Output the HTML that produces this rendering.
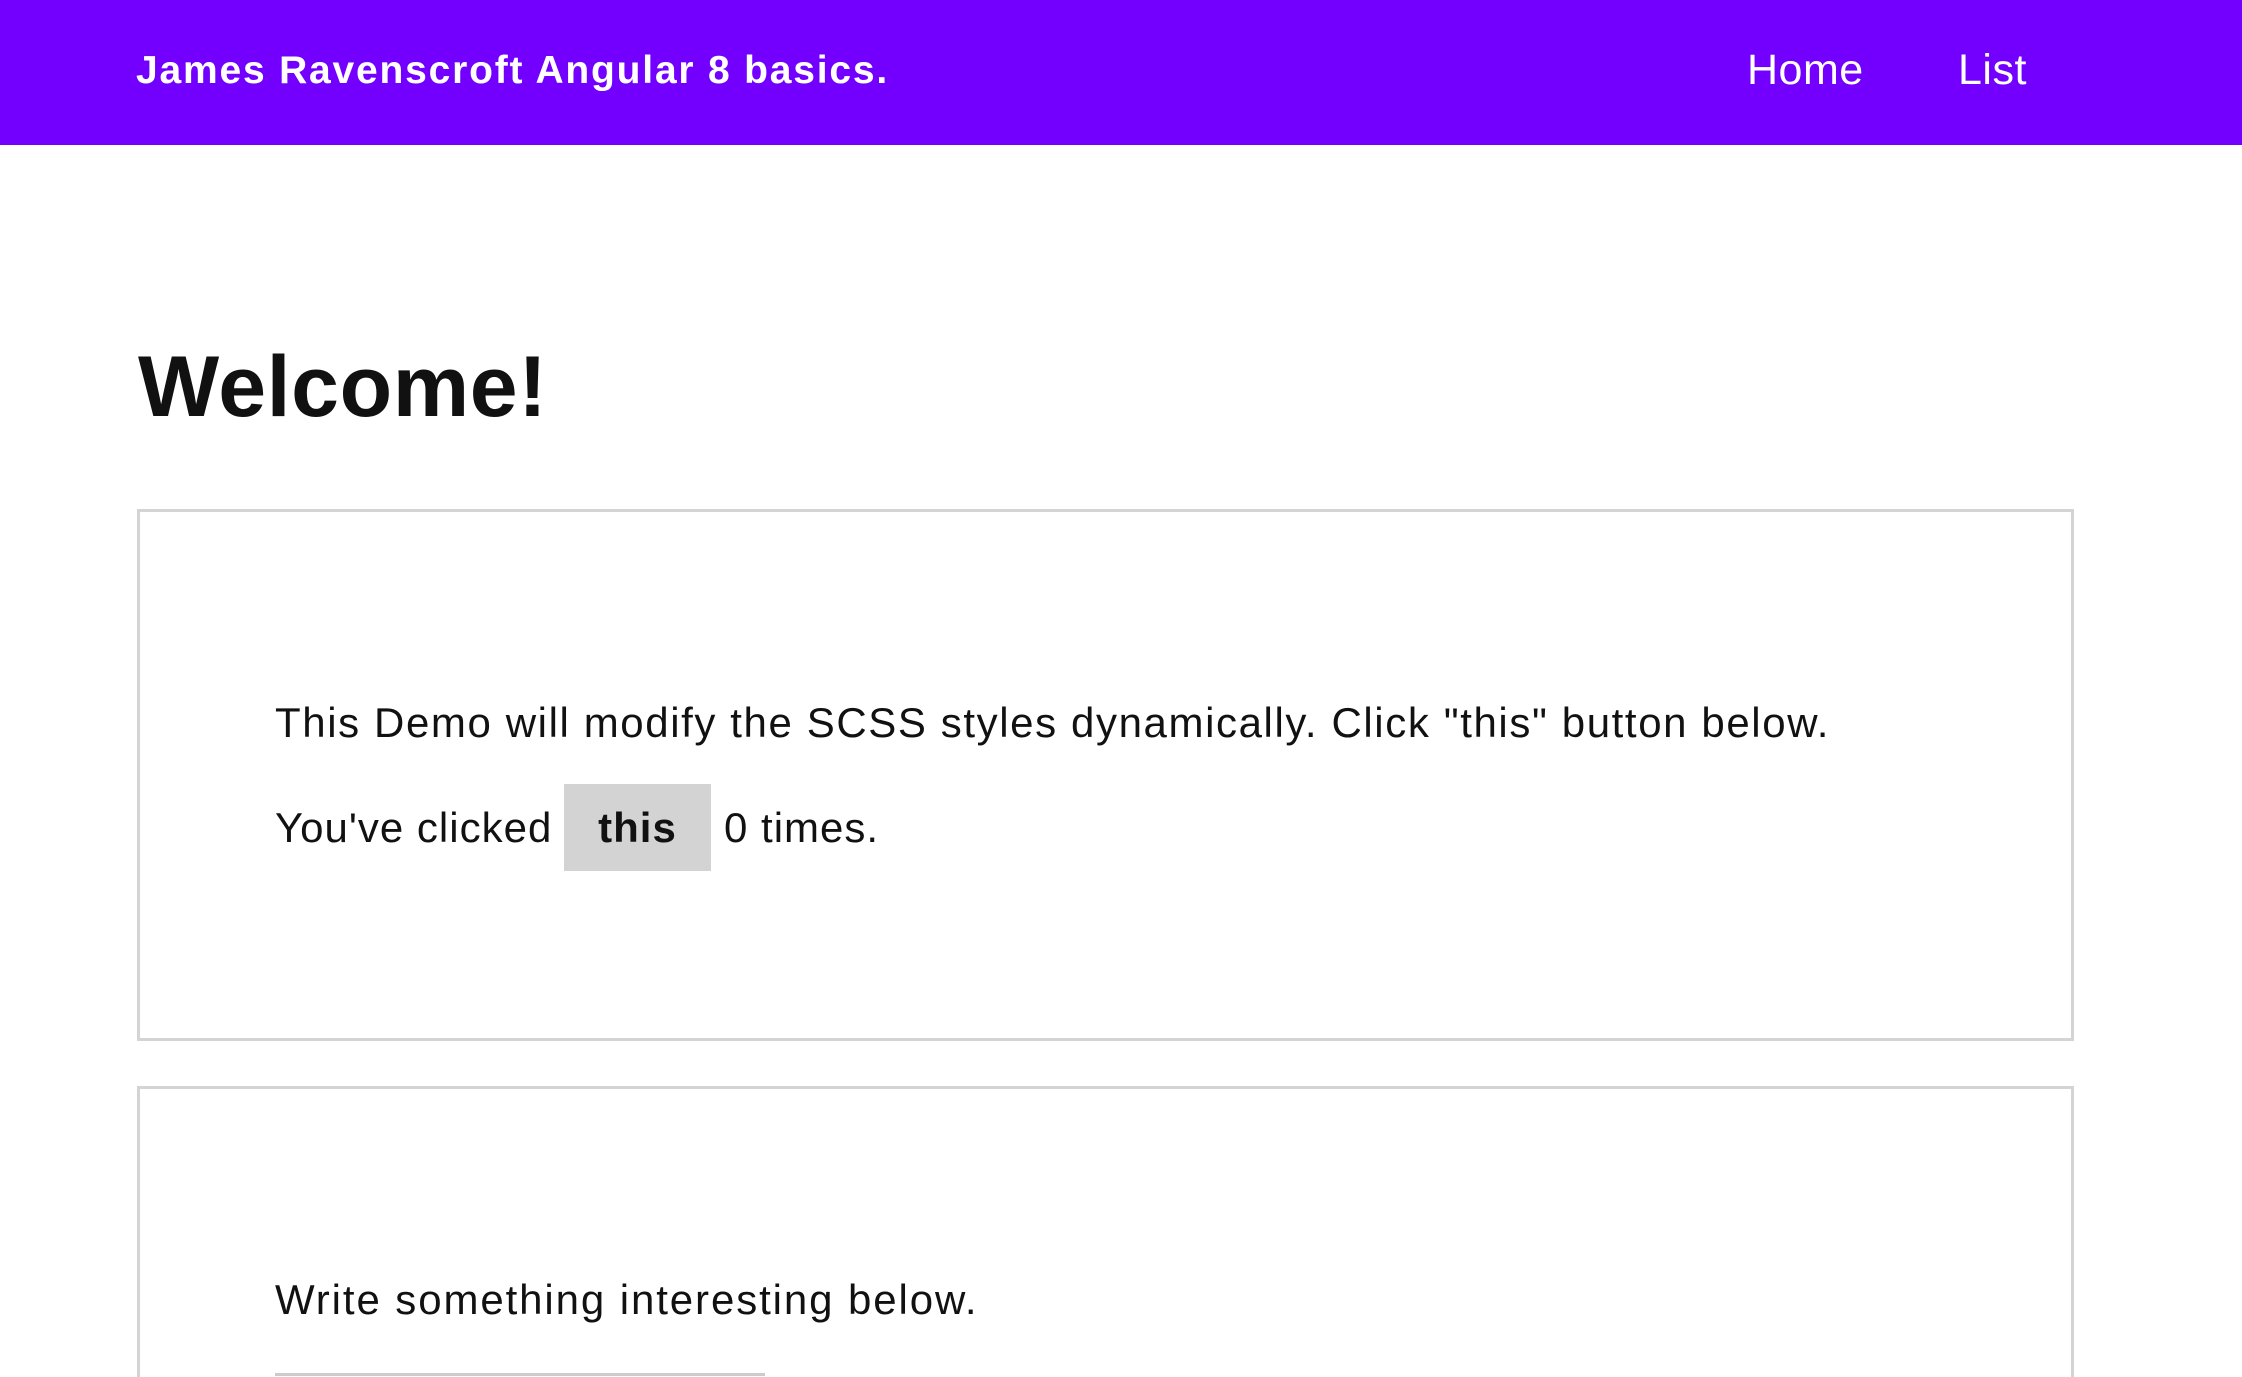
<!DOCTYPE html>
<html><head><meta charset="utf-8"><style>
html,body{margin:0;padding:0;width:2242px;height:1377px;overflow:hidden;background:#fff;font-family:"Liberation Sans",sans-serif;color:#111;}
#w{position:relative;width:2242px;height:1377px;overflow:hidden;}
.hdr{position:absolute;left:0;top:0;width:2242px;height:145px;background:#7300ff;color:#fff;}
.brand{position:absolute;left:136px;top:49px;font-size:39px;font-weight:bold;letter-spacing:1.8px;}
.nav{position:absolute;top:46px;font-size:43px;letter-spacing:0.5px;}
h1{position:absolute;left:138px;top:338px;margin:0;font-size:86px;font-weight:bold;letter-spacing:0.6px;}
.box{position:absolute;left:137px;width:1937px;border:3px solid #d4d4d4;box-sizing:border-box;}
.t{position:absolute;left:275px;font-size:42px;white-space:nowrap;letter-spacing:1.6px;}
.btn{position:absolute;left:564px;top:784px;width:147px;height:87px;background:#d3d3d3;font-weight:bold;font-size:42px;text-align:center;line-height:87px;letter-spacing:1px;}
</style></head><body><div id="w">
<div class="hdr"><div class="brand">James Ravenscroft Angular 8 basics.</div>
<div class="nav" style="left:1747px">Home</div><div class="nav" style="left:1958px">List</div></div>
<h1>Welcome!</h1>
<div class="box" style="top:509px;height:532px"></div>
<div class="t" style="top:699px">This Demo will modify the SCSS styles dynamically. Click "this" button below.</div>
<div class="t" style="top:804px;letter-spacing:1px">You've clicked</div>
<div class="btn">this</div>
<div class="t" style="top:804px;left:724px;letter-spacing:1px">0 times.</div>
<div class="box" style="top:1086px;height:291px;border-bottom:none"></div>
<div class="t" style="top:1276px;letter-spacing:1.9px">Write something interesting below.</div>
<div style="position:absolute;left:275px;top:1373px;width:490px;height:3px;background:#ccc"></div>
</div></body></html>
